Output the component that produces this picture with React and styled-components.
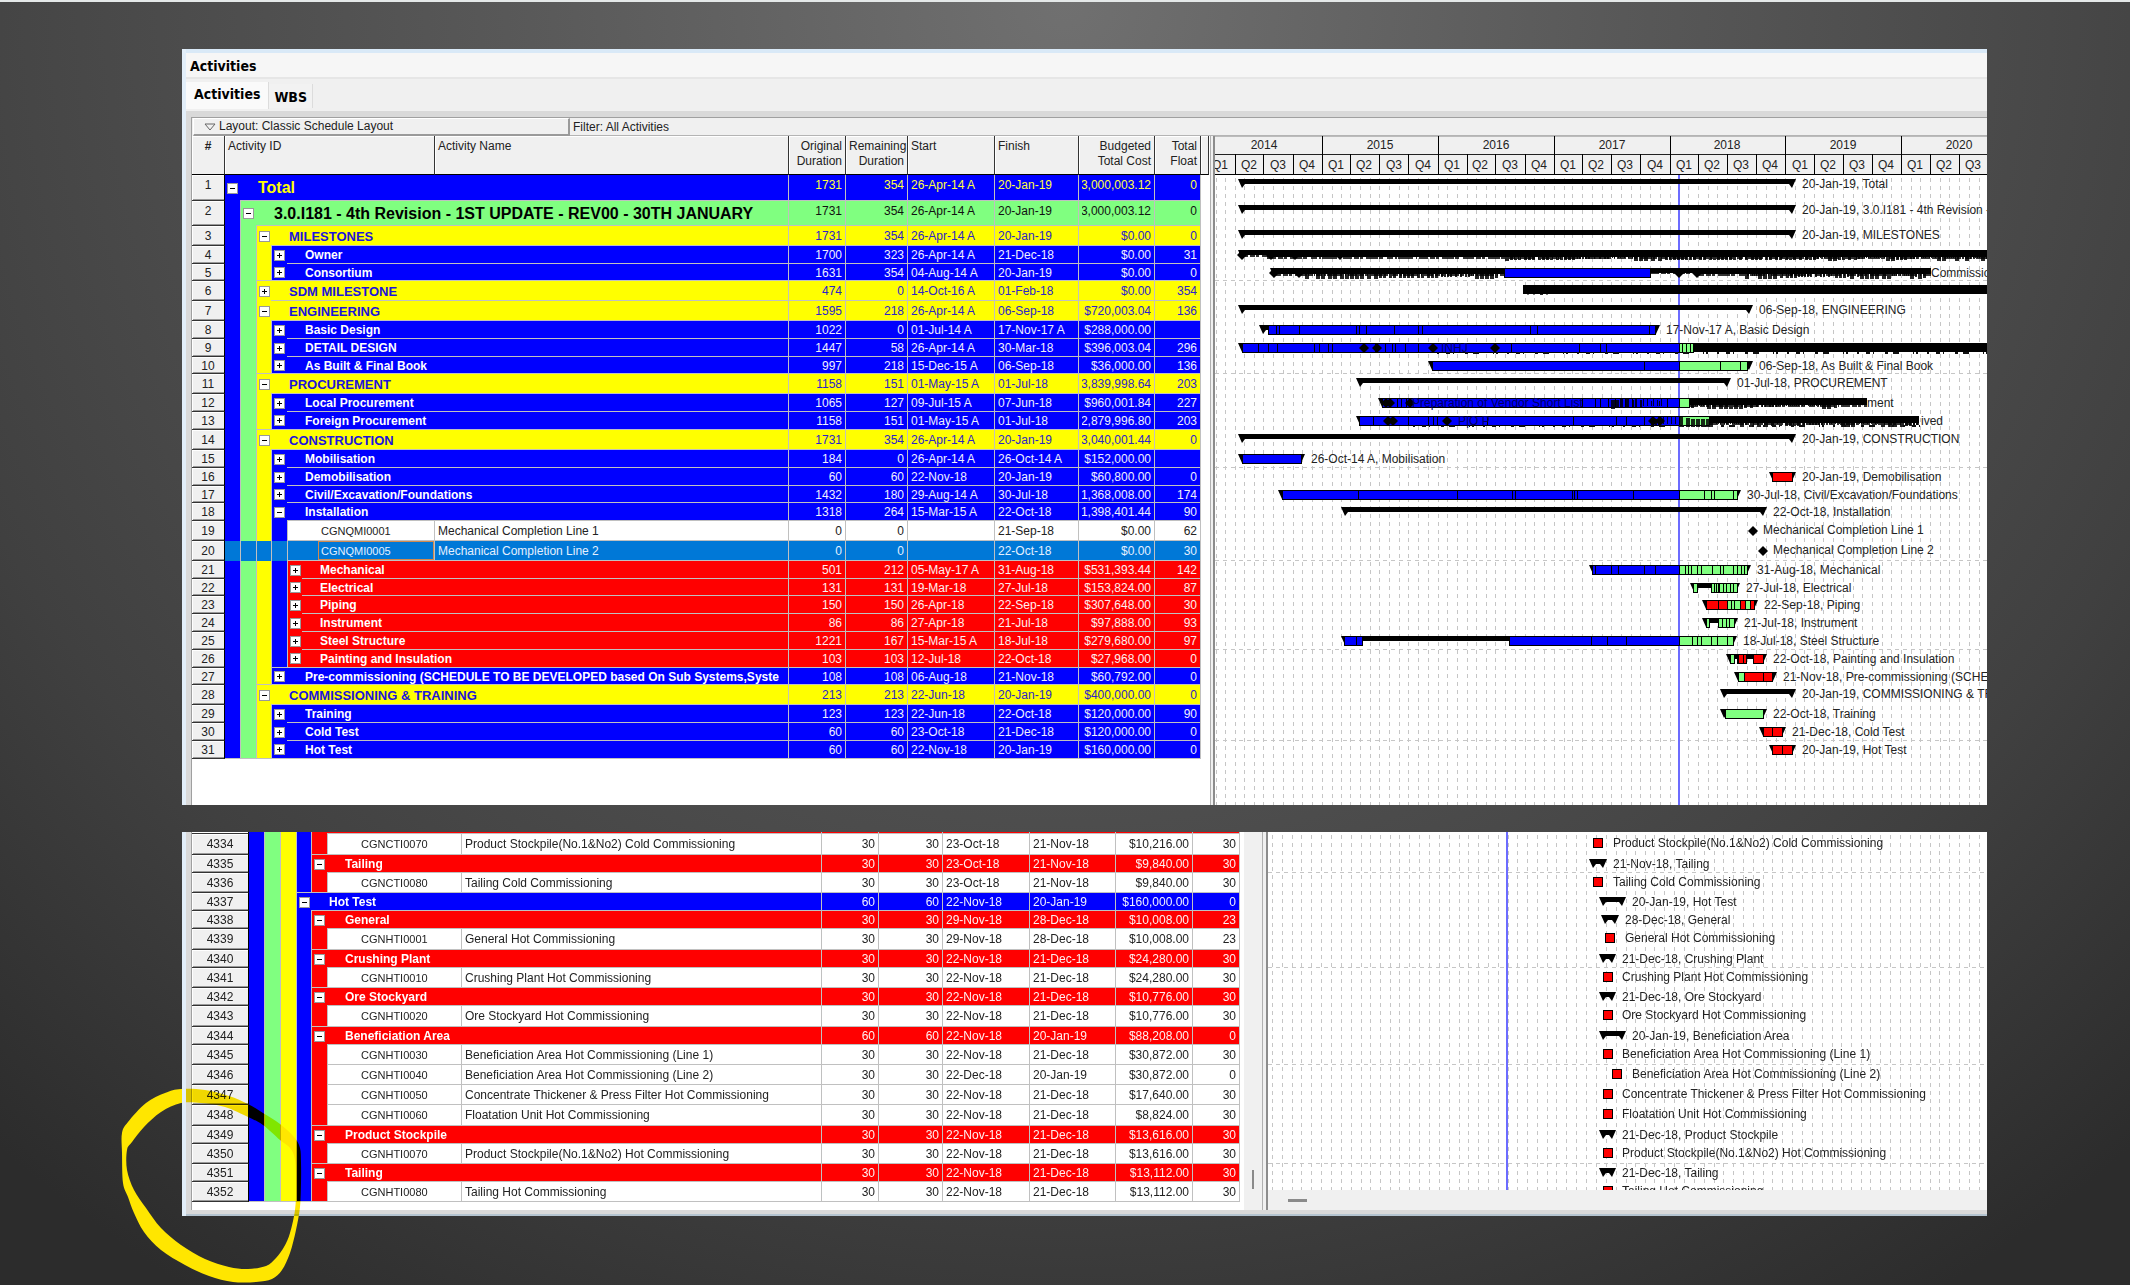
import React from "react";
import styled, { createGlobalStyle, css } from "styled-components";

const FONT = '"Liberation Sans", Arial, sans-serif';
const TITLE_FONT = '"DejaVu Sans Condensed", "DejaVu Sans", "Open Sans", sans-serif';
const BLUE = "#0000ff";
const GREEN = "#80ff80";
const YELLOW = "#ffff00";
const RED = "#ff0000";
const LINE = "#c0c0c0";
const SELECT = "#0078d7";

/* Band colours by WBS level */
const LEVELS = [
  { bg: BLUE, name: YELLOW, value: "#ffff40", size: 16 },
  { bg: GREEN, name: "#000", value: "#111", size: 16 },
  { bg: YELLOW, name: "#1c14dc", value: "#2c24c8", size: 13 },
  { bg: BLUE, name: "#fff", value: "#f0f0ff", size: 12 },
  { bg: RED, name: "#fff", value: "#fff0f0", size: 12 },
];
const LEAF = { bg: "#fff", name: "#222", value: "#222", size: 12 };

/* number, level, mark, height, name, original, remaining, start, finish, cost, float, id */
const row = (n, level, mark, h, name, od, rd, start, finish, cost, float, id) => ({
  n, level, mark, h, name, od, rd, start, finish, cost, float, id,
});

const TOP_ROWS = [
  row(1, 0, "-", 26, "Total", 1731, 354, "26-Apr-14 A", "20-Jan-19", "3,000,003.12", 0),
  row(2, 1, "-", 25, "3.0.I181 - 4th Revision - 1ST UPDATE - REV00 - 30TH JANUARY", 1731, 354, "26-Apr-14 A", "20-Jan-19", "3,000,003.12", 0),
  row(3, 2, "-", 20, "MILESTONES", 1731, 354, "26-Apr-14 A", "20-Jan-19", "$0.00", 0),
  row(4, 3, "+", 18, "Owner", 1700, 323, "26-Apr-14 A", "21-Dec-18", "$0.00", 31),
  row(5, 3, "+", 17, "Consortium", 1631, 354, "04-Aug-14 A", "20-Jan-19", "$0.00", 0),
  row(6, 2, "+", 20, "SDM MILESTONE", 474, 0, "14-Oct-16 A", "01-Feb-18", "$0.00", 354),
  row(7, 2, "-", 20, "ENGINEERING", 1595, 218, "26-Apr-14 A", "06-Sep-18", "$720,003.04", 136),
  row(8, 3, "+", 18, "Basic Design", 1022, 0, "01-Jul-14 A", "17-Nov-17 A", "$288,000.00", ""),
  row(9, 3, "+", 18, "DETAIL DESIGN", 1447, 58, "26-Apr-14 A", "30-Mar-18", "$396,003.04", 296),
  row(10, 3, "+", 17, "As Built & Final Book", 997, 218, "15-Dec-15 A", "06-Sep-18", "$36,000.00", 136),
  row(11, 2, "-", 20, "PROCUREMENT", 1158, 151, "01-May-15 A", "01-Jul-18", "3,839,998.64", 203),
  row(12, 3, "+", 18, "Local Procurement", 1065, 127, "09-Jul-15 A", "07-Jun-18", "$960,001.84", 227),
  row(13, 3, "+", 18, "Foreign Procurement", 1158, 151, "01-May-15 A", "01-Jul-18", "2,879,996.80", 203),
  row(14, 2, "-", 20, "CONSTRUCTION", 1731, 354, "26-Apr-14 A", "20-Jan-19", "3,040,001.44", 0),
  row(15, 3, "+", 18, "Mobilisation", 184, 0, "26-Apr-14 A", "26-Oct-14 A", "$152,000.00", ""),
  row(16, 3, "+", 18, "Demobilisation", 60, 60, "22-Nov-18", "20-Jan-19", "$60,800.00", 0),
  row(17, 3, "+", 17, "Civil/Excavation/Foundations", 1432, 180, "29-Aug-14 A", "30-Jul-18", "1,368,008.00", 174),
  row(18, 3, "-", 18, "Installation", 1318, 264, "15-Mar-15 A", "22-Oct-18", "1,398,401.44", 90),
  row(19, 4, "", 20, "Mechanical Completion Line 1", 0, 0, "", "21-Sep-18", "$0.00", 62, "CGNQMI0001"),
  row(20, 4, "", 20, "Mechanical Completion Line 2", 0, 0, "", "22-Oct-18", "$0.00", 30, "CGNQMI0005"),
  row(21, 4, "+", 18, "Mechanical", 501, 212, "05-May-17 A", "31-Aug-18", "$531,393.44", 142),
  row(22, 4, "+", 17, "Electrical", 131, 131, "19-Mar-18", "27-Jul-18", "$153,824.00", 87),
  row(23, 4, "+", 18, "Piping", 150, 150, "26-Apr-18", "22-Sep-18", "$307,648.00", 30),
  row(24, 4, "+", 18, "Instrument", 86, 86, "27-Apr-18", "21-Jul-18", "$97,888.00", 93),
  row(25, 4, "+", 18, "Steel Structure", 1221, 167, "15-Mar-15 A", "18-Jul-18", "$279,680.00", 97),
  row(26, 4, "+", 18, "Painting and Insulation", 103, 103, "12-Jul-18", "22-Oct-18", "$27,968.00", 0),
  row(27, 3, "+", 17, "Pre-commissioning (SCHEDULE TO BE DEVELOPED based On Sub Systems,Syste", 108, 108, "06-Aug-18", "21-Nov-18", "$60,792.00", 0),
  row(28, 2, "-", 20, "COMMISSIONING & TRAINING", 213, 213, "22-Jun-18", "20-Jan-19", "$400,000.00", 0),
  row(29, 3, "+", 18, "Training", 123, 123, "22-Jun-18", "22-Oct-18", "$120,000.00", 90),
  row(30, 3, "+", 18, "Cold Test", 60, 60, "23-Oct-18", "21-Dec-18", "$120,000.00", 0),
  row(31, 3, "+", 18, "Hot Test", 60, 60, "22-Nov-18", "20-Jan-19", "$160,000.00", 0),
];

const N22 = "22-Nov-18";
const D21 = "21-Dec-18";
const BOTTOM_ROWS = [
  row("", 4, "", 2, "", "", "", "", "", "", ""),
  row(4334, 5, "", 21, "Product Stockpile(No.1&No2) Cold Commissioning", 30, 30, "23-Oct-18", "21-Nov-18", "$10,216.00", 30, "CGNCTI0070"),
  row(4335, 4, "-", 18, "Tailing", 30, 30, "23-Oct-18", "21-Nov-18", "$9,840.00", 30),
  row(4336, 5, "", 20, "Tailing Cold Commissioning", 30, 30, "23-Oct-18", "21-Nov-18", "$9,840.00", 30, "CGNCTI0080"),
  row(4337, 3, "-", 18, "Hot Test", 60, 60, N22, "20-Jan-19", "$160,000.00", 0),
  row(4338, 4, "-", 18, "General", 30, 30, "29-Nov-18", "28-Dec-18", "$10,008.00", 23),
  row(4339, 5, "", 21, "General Hot Commissioning", 30, 30, "29-Nov-18", "28-Dec-18", "$10,008.00", 23, "CGNHTI0001"),
  row(4340, 4, "-", 18, "Crushing Plant", 30, 30, N22, D21, "$24,280.00", 30),
  row(4341, 5, "", 20, "Crushing Plant Hot Commissioning", 30, 30, N22, D21, "$24,280.00", 30, "CGNHTI0010"),
  row(4342, 4, "-", 18, "Ore Stockyard", 30, 30, N22, D21, "$10,776.00", 30),
  row(4343, 5, "", 21, "Ore Stockyard Hot Commissioning", 30, 30, N22, D21, "$10,776.00", 30, "CGNHTI0020"),
  row(4344, 4, "-", 18, "Beneficiation Area", 60, 60, N22, "20-Jan-19", "$88,208.00", 0),
  row(4345, 5, "", 20, "Beneficiation Area Hot Commissioning (Line 1)", 30, 30, N22, D21, "$30,872.00", 30, "CGNHTI0030"),
  row(4346, 5, "", 20, "Beneficiation Area Hot Commissioning (Line 2)", 30, 30, "22-Dec-18", "20-Jan-19", "$30,872.00", 0, "CGNHTI0040"),
  row(4347, 5, "", 20, "Concentrate Thickener & Press Filter Hot Commissioning", 30, 30, N22, D21, "$17,640.00", 30, "CGNHTI0050"),
  row(4348, 5, "", 21, "Floatation Unit Hot Commissioning", 30, 30, N22, D21, "$8,824.00", 30, "CGNHTI0060"),
  row(4349, 4, "-", 18, "Product Stockpile", 30, 30, N22, D21, "$13,616.00", 30),
  row(4350, 5, "", 20, "Product Stockpile(No.1&No2) Hot Commissioning", 30, 30, N22, D21, "$13,616.00", 30, "CGNHTI0070"),
  row(4351, 4, "-", 18, "Tailing", 30, 30, N22, D21, "$13,112.00", 30),
  row(4352, 5, "", 20, "Tailing Hot Commissioning", 30, 30, N22, D21, "$13,112.00", 30, "CGNHTI0080"),
];

const TOP_COLS = [33, 210, 354, 57, 62, 87, 84, 76, 46];
const BOTTOM_COLS = [57, 213, 360, 57, 64, 87, 86, 77, 47];
const TOP_BANDS = [15, 16, 15, 16, 15];
const BOTTOM_BANDS = [15, 16, 16, 15, 16];

const HEADINGS = [
  ["#", "center"], ["Activity ID", "left"], ["Activity Name", "left"],
  ["Original Duration", "right"], ["Remaining Duration", "right"],
  ["Start", "left"], ["Finish", "left"],
  ["Budgeted Total Cost", "right"], ["Total Float", "right"],
];

/* Rolled-up task bars of the upper chart: segments, task boundaries, milestones */
const ROLLUPS = {
  4: { scribble: [[24, 52, 7], [52, 250, 9], [250, 772, 9]], dots: [27, 56, 80, 125], ragged: [[290, 570], [570, 772]] },
  5: { segs: [[289, 435, BLUE]], scribble: [[57, 289, 8], [435, 480, 6], [480, 716, 8]], dots: [59, 84, 464, 482], ragged: [[90, 286], [530, 712]], tail: ["Commissioning", 716] },
  6: { solid: [[308, 772]], dots: [313, 319, 332], ragged: [[325, 360]] },
  8: { segs: [[53, 440, BLUE]], ticks: [61, 64, 84, 141, 144, 151, 179, 203, 207, 315, 322, 434] },
  9: {
    segs: [[27, 464, BLUE], [464, 478, GREEN]], solid: [[478, 772]],
    ticks: [43, 53, 62, 99, 104, 113, 117, 160, 170, 177, 180, 190, 203, 296, 364, 385, 391, 467, 471, 475],
    dots: [149, 162, 218, 280], note: ["INHJ", 226], under: [222, 772],
  },
  10: { segs: [[217, 464, BLUE], [464, 532, GREEN]], ticks: [429, 505, 525] },
  12: {
    segs: [[167, 464, BLUE], [464, 474, GREEN]], ticks: [182, 186, 191, 367, 380, 385, 393, 400, 410, 417, 452],
    dots: [171, 175, 195], scribble: [[474, 652, 9]], ragged: [[396, 450], [476, 620]], note: ["Preparation of Vendor Short List", 197], tail: ["ment", 652],
  },
  13: {
    segs: [[144, 464, BLUE], [464, 494, GREEN]], ticks: [158, 193, 213, 218, 222, 272, 358, 401, 411, 429],
    dots: [173, 178, 232, 438, 445], scribble: [[494, 704, 9]], ragged: [[436, 494], [494, 704]], note: ["P|O P", 243], tail: ["ived", 706], under: [198, 706],
  },
  15: { segs: [[27, 86, BLUE]] },
  16: { segs: [[557, 577, RED]] },
  17: { segs: [[67, 464, BLUE], [464, 522, GREEN]], ticks: [143, 242, 297, 300, 357, 359, 362, 418, 489, 496, 499, 518] },
  21: { segs: [[377, 464, BLUE], [464, 532, GREEN]], ticks: [380, 396, 403, 429, 440, 470, 473, 476, 482, 486, 497, 505, 508, 518, 522, 526, 529] },
  22: { segs: [[478, 482, GREEN], [496, 522, GREEN]], ticks: [499, 501, 503, 504, 508, 511, 515, 518] },
  23: { segs: [[491, 512, RED], [512, 525, GREEN], [525, 530, RED], [530, 535, GREEN], [535, 539, RED]], ticks: [503, 516, 519] },
  24: { segs: [[491, 494, GREEN], [503, 519, GREEN]], ticks: [507, 511, 514] },
  25: { segs: [[129, 147, BLUE], [294, 464, BLUE], [464, 518, GREEN]], ticks: [141, 376, 392, 411, 477, 482, 486, 496, 502, 512] },
  26: { segs: [[515, 519, GREEN], [523, 531, RED], [538, 548, RED]], ticks: [522, 528] },
  27: { segs: [[523, 529, GREEN], [529, 557, RED]], ticks: [548] },
  29: { segs: [[510, 548, GREEN]] },
  30: { segs: [[548, 567, RED]], ticks: [557] },
  31: { segs: [[557, 577, RED]], ticks: [567] },
};

const GlobalStyle = createGlobalStyle`
  body {
    margin: 0;
    font-family: ${FONT};
    font-size: 12px;
    background: #3a3a3a;
  }
  button {
    font: inherit;
    color: inherit;
    margin: 0;
  }
`;

const Slide = styled.main`
  box-sizing: border-box;
  min-height: 100vh;
  padding: 47px 143px 64px 182px;
  border-top: 2px solid #e4e8e8;
  overflow: hidden;
  display: flex;
  flex-direction: column;
  gap: 27px;
  background: radial-gradient(ellipse 75% 120% at 50% 0%, #707070 0%, #585858 35%, #404040 75%, #2c2c2c 100%);
`;

const Stage = styled.div`
  position: relative;
`;

const Window = styled.section`
  position: relative;
  z-index: 1;
  isolation: isolate;
  overflow: hidden;
  background: #f0f0f0;
  border-left: 4px solid #e2eef9;
`;

const TitleBar = styled.h1`
  margin: 0;
  padding: 2px 0 0 4px;
  border-top: 4px solid #d9e9f7;
  border-bottom: 2px solid #e6e6e6;
  background: #f6f6f6;
  color: #000;
  font: bold 14px/22px ${TITLE_FONT};
`;

const TabStrip = styled.nav`
  display: flex;
  align-items: flex-start;
  height: 29px;
  padding-top: 3px;
  background: #f0f0f0;
`;

const Tab = styled.button`
  height: ${(p) => (p.$active ? 27 : 24)}px;
  margin-top: ${(p) => (p.$active ? 0 : 2)}px;
  padding: ${(p) => (p.$active ? "0 8px 4px" : "1px 5px 0")};
  border: 0;
  border-right: 1px solid #dcdcdc;
  background: ${(p) => (p.$active ? "#fafafa" : "#f2f2f2")};
  color: #000;
  font: bold 14px/20px ${TITLE_FONT};
`;

const Workspace = styled.div`
  padding: ${(p) => (p.$head ? 6 : 0)}px 0 ${(p) => (p.$head ? 0 : 4)}px 5px;
  background: #d9d9d9;
`;

const Frame = styled.div`
  border-left: 1px solid #a0a0a0;
  border-top: ${(p) => (p.$head ? "1px solid #a0a0a0" : "0")};
  background: #fff;
`;

const LayoutBar = styled.div`
  display: flex;
  height: 18px;
  background: #f0f0f0;
  color: #222;
  line-height: 18px;
`;

const LayoutButton = styled.button`
  display: flex;
  align-items: center;
  gap: 3px;
  width: 377px;
  margin-left: 1px;
  padding: 0 0 0 10px;
  border: 1px solid #fff;
  border-right: 2px solid #9a9a9a;
  border-bottom: 2px solid #9a9a9a;
  background: #f0f0f0;
  text-align: left;
  line-height: 15px;
`;

const FilterText = styled.div`
  flex: 1;
  padding-left: 3px;
  border-bottom: 1px solid #b4b4b4;
`;

const Split = styled.div`
  display: flex;
`;

const GridPane = styled.div`
  flex: none;
  padding-right: ${(p) => p.$gap}px;
  background: #fff;
`;

const Table = styled.table`
  table-layout: fixed;
  border-collapse: separate;
  border-spacing: 0;
  width: ${(p) => p.$w}px;
`;

const HeadCell = styled.th`
  box-sizing: border-box;
  height: 39px;
  padding: 3px 3px 0;
  border-right: 1px solid #333;
  border-bottom: 1px solid #000;
  background: #f0f0f0;
  color: #222;
  box-shadow: inset 1px 1px 0 #fff;
  font-weight: ${(p) => (p.$align === "center" ? "bold" : "normal")};
  font-size: 12px;
  line-height: 15px;
  text-align: ${(p) => p.$align};
  vertical-align: top;
`;

/* Rows keep their text a hair below the middle; the thin clipped row has no text */
const drop = (h) => (h > 10 ? 2 : 0);
const lineFor = (h, max) => Math.max(Math.min(h, max) - 3, 1);

const NumberCell = styled.td`
  box-sizing: border-box;
  height: ${(p) => p.$h}px;
  padding: ${(p) => drop(p.$h)}px 0 0;
  border-right: 1px solid #000;
  border-bottom: 1px solid #333;
  background: #f0f0f0;
  box-shadow: inset 1px 1px 0 #fff, inset 0 -1px 0 #999;
  color: #222;
  line-height: ${(p) => lineFor(p.$h, 20)}px;
  text-align: center;
  vertical-align: top;
`;

const BandCell = styled.td`
  padding: 0;
  height: ${(p) => p.$h}px;
  overflow: hidden;
`;

const BandRow = styled.div`
  display: flex;
  height: ${(p) => p.$h}px;
`;

const Band = styled.div`
  box-sizing: border-box;
  flex: none;
  width: ${(p) => p.$w}px;
  background: ${(p) => p.$bg};
  border-left: ${(p) => (p.$first ? "0" : `1px solid ${LINE}`)};
  border-bottom: ${(p) => (p.$end ? `1px solid ${LINE}` : "0")};
  display: flex;
  align-items: center;
  justify-content: center;
`;

const ToggleButton = styled.button`
  position: relative;
  box-sizing: border-box;
  width: 11px;
  height: 11px;
  padding: 0;
  border: 1px solid #999;
  background: #fff;
  &::before {
    content: "";
    position: absolute;
    left: 2px;
    top: 4px;
    width: 5px;
    height: 1px;
    background: #000;
  }
  &::after {
    content: "";
    display: ${(p) => (p.$plus ? "block" : "none")};
    position: absolute;
    left: 4px;
    top: 2px;
    width: 1px;
    height: 5px;
    background: #000;
  }
`;

const cellText = css`
  box-sizing: border-box;
  border-bottom: 1px solid ${LINE};
  background: ${(p) => p.$bg};
  color: ${(p) => p.$fg};
  white-space: nowrap;
  overflow: hidden;
`;

const GroupName = styled.div`
  ${cellText}
  flex: 1;
  min-width: 0;
  padding-top: ${(p) => drop(p.$h)}px;
  padding-left: 18px;
  border-right: 1px solid ${LINE};
  font-weight: bold;
  font-size: ${(p) => p.$size}px;
  line-height: ${(p) => lineFor(p.$h, 24)}px;
`;

const GroupClip = styled.div`
  overflow: hidden;
  margin-right: 3px;
`;

const LeafId = styled.div`
  ${cellText}
  flex: 1;
  display: flex;
  padding-left: 30px;
  border-left: 1px solid ${LINE};
  border-right: 1px solid ${LINE};
`;

const LeafIdText = styled.span`
  box-sizing: border-box;
  flex: 1;
  padding-top: 1px;
  padding-left: 2px;
  border: 1px solid ${(p) => (p.$focus ? "#d08a50" : "transparent")};
  font-size: 11px;
  line-height: ${(p) => p.$h - 4}px;
`;

const ValueCell = styled.td`
  ${cellText}
  height: ${(p) => p.$h}px;
  padding: ${(p) => drop(p.$h)}px 3px 0;
  border-right: 1px solid ${LINE};
  line-height: ${(p) => lineFor(p.$h, 20)}px;
  vertical-align: top;
`;

const RightText = styled.div`
  display: flex;
  justify-content: flex-end;
  overflow: hidden;
`;

const Splitter = styled.div`
  box-sizing: border-box;
  flex: none;
  width: ${(p) => p.$w}px;
  background: #f0f0f0;
  border-left: 1px solid #b0b0b0;
  border-right: 2px solid #8c8c8c;
`;

const ScrollColumn = styled.div`
  box-sizing: border-box;
  flex: none;
  display: flex;
  justify-content: center;
  align-items: flex-end;
  width: 18px;
  padding-bottom: 21px;
  background: #f0f0f0;
`;

const ScrollRow = styled.div`
  display: flex;
  align-items: center;
  height: 20px;
  padding-left: 20px;
  background: #f0f0f0;
`;

const Thumb = styled.div`
  width: ${(p) => (p.$vertical ? 2 : 19)}px;
  height: ${(p) => (p.$vertical ? 19 : 3)}px;
  background: #8a8a8a;
`;

const ChartPane = styled.div`
  flex: 1;
  min-width: 0;
  background: #fff;
`;

const ChartSvg = styled.svg`
  display: block;
  width: 100%;
  height: ${(p) => p.$h}px;
  overflow: hidden;
  font-family: ${FONT};
  font-size: 12px;
`;

const BottomEdge = styled.div`
  height: 2px;
  background: #b4c4d0;
`;

const Marker = styled.svg`
  position: absolute;
  left: ${(p) => p.$left}px;
  top: 248px;
  width: 200px;
  height: 205px;
  pointer-events: none;
  mix-blend-mode: ${(p) => (p.$ink ? "multiply" : "normal")};
`;

const MONTHS = ["Jan", "Feb", "Mar", "Apr", "May", "Jun", "Jul", "Aug", "Sep", "Oct", "Nov", "Dec"];
const EPOCH = Date.UTC(2014, 0, 1);
const dayOf = (y, m, d) => (Date.UTC(y, m, d) - EPOCH) / 86400000;
const parseDay = (text) => {
  const [d, m, y] = text.replace(" A", "").split("-");
  return dayOf(2000 + Number(y), MONTHS.indexOf(m), Number(d));
};

const TOP_SCALE = { origin: -9, perDay: 0.3173, years: 7 };
const BOTTOM_SCALE = { origin: -241, perDay: 0.3224, years: 9 };
const at = (scale, day) => Math.round(scale.origin + day * scale.perDay);

function ActivityTable({ rows, cols, bands, head, selected }) {
  const total = cols.reduce((a, b) => a + b, 0);
  return (
    <Table $w={total + (head ? 8 : 0)}>
      <colgroup>
        {cols.map((w, i) => <col key={i} style={{ width: w }} />)}
        {head && <col />}
      </colgroup>
      {head && (
        <thead>
          <tr>
            {HEADINGS.map(([label, align]) => <HeadCell key={label} $align={align} scope="col">{label}</HeadCell>)}
            <HeadCell as="td" />
          </tr>
        </thead>
      )}
      <tbody>
        {rows.map((r, i) => {
          const leaf = Boolean(r.id);
          const picked = r.n === selected;
          const look = leaf ? LEAF : LEVELS[r.level];
          const bg = picked ? SELECT : look.bg;
          const fg = picked ? "#e4f0ff" : look.value;
          const next = rows[i + 1];
          const last = i === rows.length - 1;
          const values = [[r.od, 1], [r.rd, 1], [r.start, 0], [r.finish, 0], [r.cost, 1], [r.float, 1]];
          const bandsHere = Array.from({ length: r.level }, (_, k) => (
            <Band key={k} $w={bands[k]} $bg={picked ? SELECT : LEVELS[k].bg} $first={k === 0}
              $end={last || (next && next.level < k + 1)} />
          ));
          return (
            <tr key={i}>
              <NumberCell $h={r.h}>{r.n}</NumberCell>
              {leaf ? (
                <>
                  <BandCell $h={r.h}>
                    <BandRow $h={r.h}>
                      {bandsHere}
                      <LeafId $bg={bg} $fg={fg}>
                        <LeafIdText $h={r.h} $focus={picked}>{r.id}</LeafIdText>
                      </LeafId>
                    </BandRow>
                  </BandCell>
                  <ValueCell $h={r.h} $bg={bg} $fg={fg}>{r.name}</ValueCell>
                </>
              ) : (
                <BandCell $h={r.h} colSpan={2}>
                  <BandRow $h={r.h}>
                    {bandsHere}
                    <Band $w={bands[r.level]} $bg={bg} $first={r.level === 0} $end={last || (next && next.level < r.level)}>
                      {r.mark && <ToggleButton $plus={r.mark === "+"} aria-label={(r.mark === "+" ? "Expand " : "Collapse ") + r.name} />}
                    </Band>
                    <GroupName $bg={bg} $fg={look.name} $size={look.size} $h={r.h}>
                      <GroupClip>{r.name}</GroupClip>
                    </GroupName>
                  </BandRow>
                </BandCell>
              )}
              {values.map(([v, right], k) => (
                <ValueCell key={k} $h={r.h} $bg={bg} $fg={fg}>
                  {right ? <RightText>{v}</RightText> : v}
                </ValueCell>
              ))}
            </tr>
          );
        })}
      </tbody>
    </Table>
  );
}

function TimeScale({ scale }) {
  const years = Array.from({ length: scale.years }, (_, i) => 2014 + i);
  return (
    <ChartSvg $h={39} shapeRendering="crispEdges">
      <rect width="100%" height="39" fill="#f0f0f0" />
      <rect width="100%" height="1" fill="#bbb" />
      <rect y="18" width="100%" height="1" fill="#222" />
      <rect y="38" width="100%" height="1" fill="#000" />
      {years.map((y) => (
        <g key={y} fill="#222" textAnchor="middle">
          <rect x={at(scale, dayOf(y, 0, 1))} width="1" height="38" fill="#000" />
          <text x={at(scale, dayOf(y, 6, 2))} y="13">{y}</text>
          {[0, 1, 2, 3].map((q) => (
            <g key={q}>
              <rect x={at(scale, dayOf(y, q * 3, 1))} y="18" width="1" height="20" fill="#000" />
              <text x={at(scale, dayOf(y, q * 3 + 1, 15))} y="33">Q{q + 1}</text>
            </g>
          ))}
        </g>
      ))}
    </ChartSvg>
  );
}

function Summary({ x1, x2, y }) {
  return (
    <path d={`M${x1 - 4} ${y}H${x2 + 4}L${x2} ${y + 9}L${x2 - 3} ${y + 5}H${x1 + 3}L${x1} ${y + 9}Z`} fill="#000" />
  );
}

function Diamond({ x, y }) {
  return <path d={`M${x} ${y - 5}L${x + 5} ${y}L${x} ${y + 5}L${x - 5} ${y}Z`} fill="#000" />;
}

/* Uneven strokes for places where many task captions pile up on one line */
const raggedPath = (a, b, y) => {
  let d = "";
  let seed = a * 7 + 3;
  for (let x = a; x < b;) {
    seed = (seed * 1103515245 + 12345) % 2147483648;
    const r = (seed >> 8) % 100;
    const w = 1 + (r % 4);
    const top = 1 + (r % 3);
    const bottom = 8 + (r % 4);
    d += `M${x} ${y + top}h${w}v${bottom - top}h${-w}Z`;
    x += w + 1 + (r % 3 === 0 ? 2 : 0);
  }
  return d;
};

function Rollup({ data, y }) {
  return (
    <g>
      {(data.segs || []).map(([a, b, color]) => (
        <rect key={a} x={a + 0.5} y={y + 0.5} width={b - a} height="9" fill={color} stroke="#000" />
      ))}
      {(data.ticks || []).map((t) => <rect key={t} x={t} y={y} width="1" height="10" fill="#000" shapeRendering="crispEdges" />)}
      {(data.solid || []).map(([a, b]) => <rect key={a} x={a} y={y} width={b - a} height="9" fill="#000" />)}
      {(data.scribble || []).map(([a, b, h]) => (
        <g key={a}>
          <rect x={a} y={y} width={b - a} height={h - 2} fill="#000" />
          <line x1={a} x2={b} y1={y + h - 1} y2={y + h - 1} stroke="#000" strokeWidth="2" opacity="0.8"
            strokeDasharray="9 2 5 1 3 3 12 1 4 4 6 2 2 1 15 3 1 2" />
        </g>
      ))}
      {(data.ragged || []).map(([a, b]) => <path key={a} d={raggedPath(a, b, y)} fill="#000" opacity="0.85" />)}
      {data.under && (
        <line x1={data.under[0]} x2={data.under[1]} y1={y + 10} y2={y + 10} stroke="#111" strokeWidth="2"
          strokeDasharray="2 7 4 3 1 11 3 5 6 14 1 2 2 9" />
      )}
      {(data.dots || []).map((d) => <Diamond key={d} x={d} y={y + 5} />)}
      {data.note && <text x={data.note[1]} y={y + 9} fill="#000060">{data.note[0]}</text>}
      {data.tail && <text x={data.tail[1]} y={y + 9} fill="#222">{data.tail[0]}</text>}
    </g>
  );
}

function Gantt({ rows, scale, height, rollups = {}, milestones }) {
  const months = Array.from({ length: scale.years * 12 }, (_, i) => at(scale, dayOf(2014, i, 1)));
  const tops = [];
  rows.reduce((y, r) => { tops.push(y); return y + r.h; }, 0);
  const today = at(scale, parseDay("30-Jan-18"));
  return (
    <ChartSvg $h={height}>
      <g stroke="#c6c6c6" strokeDasharray="4 4" shapeRendering="crispEdges">
        {months.map((x) => <line key={x} x1={x + 0.5} x2={x + 0.5} y1="3" y2={height} />)}
        {rows.map((r, i) => r.n && r.n % 5 === 0 && (
          <line key={r.n} x1="0" x2="100%" y1={tops[i] + r.h - 0.5} y2={tops[i] + r.h - 0.5} />
        ))}
      </g>
      <rect x={today - 1} width="2" height={height} fill="#6c6cff" />
      {rows.map((r, i) => {
        if (!r.n) return null;
        const y = tops[i] + 4;
        const end = at(scale, parseDay(r.finish) + 1);
        const busy = rollups[r.n];
        if (r.id) {
          const start = r.start ? at(scale, parseDay(r.start)) : end;
          return (
            <g key={r.n}>
              {milestones
                ? <Diamond x={end} y={y + 6} />
                : <rect x={start + 0.5} y={y + 0.5} width="9" height="9" fill={RED} stroke="#000" />}
              <text x={end + 10} y={y + 9} fill="#222">{r.name}</text>
            </g>
          );
        }
        const crowded = busy && (busy.scribble || busy.solid);
        const start = at(scale, parseDay(r.start));
        return (
          <g key={r.n}>
            <Summary x1={start} x2={end} y={y} />
            {busy && <Rollup data={busy} y={y} />}
            {!crowded && <text x={end + 10} y={y + 9} fill="#222">{`${r.finish}, ${r.name}`}</text>}
          </g>
        );
      })}
    </ChartSvg>
  );
}

/* Hand-drawn highlighter loop round the last row numbers */
const OUTER = [[71, 9], [95, 10], [119, 16], [138, 24], [153, 33], [170, 44], [184, 57], [190, 68], [191, 83], [191, 103], [190, 127], [186, 150], [180, 173], [172, 190], [162, 199], [146, 202], [123, 202], [99, 196], [75, 185], [51, 170], [34, 152], [24, 133], [18, 117], [13, 103], [12, 73], [12, 53], [18, 42], [36, 23], [55, 13]];
const INNER = [[71, 23], [91, 23], [115, 27], [138, 37], [153, 45], [170, 60], [180, 68], [185, 80], [186, 107], [185, 130], [180, 153], [174, 167], [166, 178], [156, 186], [138, 189], [119, 187], [95, 179], [71, 165], [51, 148], [36, 128], [24, 110], [17, 90], [17, 70], [22, 62], [34, 47], [51, 32]];
const loop = (pts) => {
  const n = pts.length;
  const p = (i) => pts[(i + n) % n];
  return pts.reduce((d, [x, y], i) => {
    const [ax, ay] = p(i - 1);
    const [bx, by] = p(i + 1);
    const [cx, cy] = p(i + 2);
    return `${d}C${x + (bx - ax) / 6} ${y + (by - ay) / 6} ${bx - (cx - x) / 6} ${by - (cy - y) / 6} ${bx} ${by}`;
  }, `M${pts[0][0]} ${pts[0][1]}`) + "Z";
};

function Highlighter({ ink, left }) {
  return (
    <Marker $ink={ink} $left={left} aria-hidden="true">
      <path d={loop(OUTER) + loop(INNER)} fill="#ffe600" fillRule="evenodd" />
    </Marker>
  );
}

export default function App() {
  return (
    <Slide>
      <GlobalStyle />
      <Window>
        <TitleBar>Activities</TitleBar>
        <TabStrip>
          <Tab $active>Activities</Tab>
          <Tab>WBS</Tab>
        </TabStrip>
        <Workspace $head>
          <Frame $head>
            <LayoutBar>
              <LayoutButton>
                <svg width="12" height="8" viewBox="0 0 12 8" fill="none" stroke="#666">
                  <path d="M1 1H11L6 7Z" />
                </svg>
                Layout: Classic Schedule Layout
              </LayoutButton>
              <FilterText>Filter: All Activities</FilterText>
            </LayoutBar>
            <Split>
              <GridPane $gap={1}>
                <ActivityTable rows={TOP_ROWS} cols={TOP_COLS} bands={TOP_BANDS} head selected={20} />
              </GridPane>
              <Splitter $w={5} />
              <ChartPane>
                <TimeScale scale={TOP_SCALE} />
                <Gantt rows={TOP_ROWS} scale={TOP_SCALE} height={630} rollups={ROLLUPS} milestones />
              </ChartPane>
            </Split>
          </Frame>
        </Workspace>
      </Window>
      <Stage>
        <Highlighter left={-72} />
        <Window>
          <Workspace>
            <Frame>
              <Split>
                <GridPane $gap={4}>
                  <ActivityTable rows={BOTTOM_ROWS} cols={BOTTOM_COLS} bands={BOTTOM_BANDS} />
                </GridPane>
                <ScrollColumn><Thumb $vertical /></ScrollColumn>
                <Splitter $w={6} />
                <ChartPane>
                  <Gantt rows={BOTTOM_ROWS} scale={BOTTOM_SCALE} height={358} />
                  <ScrollRow><Thumb /></ScrollRow>
                </ChartPane>
              </Split>
            </Frame>
          </Workspace>
          <BottomEdge />
          <Highlighter ink left={-76} />
        </Window>
      </Stage>
    </Slide>
  );
}
